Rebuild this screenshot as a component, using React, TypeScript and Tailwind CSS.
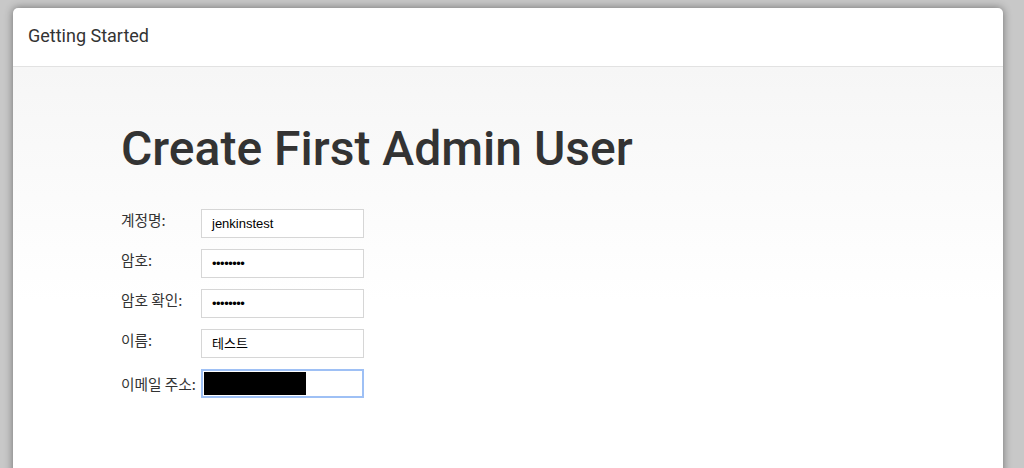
export default function App() {
  const rows = [
    { label: "계정명:", value: "jenkinstest", type: "text" },
    { label: "암호:", value: "••••••••", type: "dots" },
    { label: "암호 확인:", value: "••••••••", type: "dots" },
    { label: "이름:", value: "테스트", type: "text" },
  ];

  return (
    <div className="h-[468px] overflow-hidden bg-[#c8c8c8] pl-[13px] pt-[8px]">
      <div className="w-[990px] h-[520px] rounded-[5px] bg-white shadow-[0_0_8px_rgba(0,0,0,0.45)] overflow-hidden">
        <div className="h-[59px] flex items-center border-b border-[#e2e2e2] px-[15px]">
          <h2 className="font-['Roboto',sans-serif] text-[18px] text-[#333] leading-none -mt-[2px]">Getting Started</h2>
        </div>

        <div className="bg-gradient-to-b from-[#f6f6f6] to-white to-[45%] h-full pl-[108px] pt-[58px]">
          <h1 className="font-['Roboto',sans-serif] font-medium text-[48px] text-[#333] leading-none">Create First Admin User</h1>

          <div className="mt-[36px] flex flex-col gap-[11px] font-['Noto_Sans_CJK_KR','Liberation_Sans',sans-serif] text-[14.7px] text-[#333]">
            {rows.map((r) => (
              <div key={r.label} className="flex items-start">
                <label className="w-[80px] pt-[1px] leading-[20px]">{r.label}</label>
                <div className="w-[163px] h-[29px] border border-[#d6d6d6] bg-white flex items-center pl-[10px] text-black">
                  {r.type === "dots" ? (
                    <span className="font-['Liberation_Sans',sans-serif] text-[13px] tracking-[-0.5px]">{r.value}</span>
                  ) : (
                    <span className="font-['Liberation_Sans','Noto_Sans_CJK_KR',sans-serif] text-[13px]">{r.value}</span>
                  )}
                </div>
              </div>
            ))}
            <div className="flex items-start">
              <label className="w-[80px] pt-[5px] leading-[20px] whitespace-nowrap">이메일 주소:</label>
              <div className="w-[163px] h-[29px] border-2 border-[#9ec0f5] bg-white p-[1px]">
                <div className="w-[102px] h-full bg-black" />
              </div>
            </div>
          </div>
        </div>
      </div>
    </div>
  );
}
